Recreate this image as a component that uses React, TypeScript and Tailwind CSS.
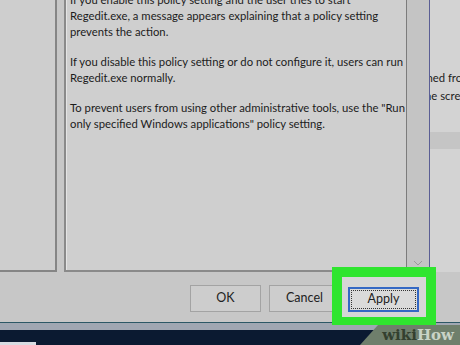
export default function App() {
  const paragraphs = [
    [
      "If you enable this policy setting and the user tries to start",
      "Regedit.exe, a message appears explaining that a policy setting",
      "prevents the action.",
    ],
    [
      "If you disable this policy setting or do not configure it, users can run",
      "Regedit.exe normally.",
    ],
    [
      'To prevent users from using other administrative tools, use the "Run',
      'only specified Windows applications" policy setting.',
    ],
  ];

  return (
    <div className="relative flex h-[345px] w-[460px] flex-col overflow-hidden bg-[#c7c7c7] font-['Lato','Noto_Sans',sans-serif] text-[#1c1c1c]">
      {/* dialog */}
      <div className="flex h-[322px] flex-col">
        <div className="flex h-[272px]">
          {/* options panel */}
          <div className="w-[57px] shrink-0 border-r-2 border-b-2 border-[#858585] bg-[#cecece]" />
          <div className="w-[7px] shrink-0" />

          {/* help box */}
          <div className="flex w-[365px] shrink-0 border-l-2 border-b-2 border-[#8a8a8a] bg-[#cfcfcf]">
            <div className="min-w-0 flex-1 overflow-hidden border-l border-[#e4e4e4] pl-[3px]">
              <div className="mt-[-8px] text-[11.3px] leading-[16px]">
                {paragraphs.map((p, i) => (
                  <div key={i} className="mb-[14px]">
                    {p.map((line) => (
                      <div key={line} className="whitespace-nowrap">
                        {line}
                      </div>
                    ))}
                  </div>
                ))}
              </div>
            </div>
            <div className="flex w-[23px] shrink-0 flex-col justify-end border-l border-[#7c7c7c] bg-[#c4c4c4] pb-[2px]">
              <svg width="22" height="10" viewBox="0 0 22 10" className="mx-auto">
                <path d="M7 3 L11 7 L15 3" fill="none" stroke="#9a9a9a" strokeWidth="1" />
              </svg>
            </div>
          </div>

          {/* window behind */}
          <div className="flex min-w-0 flex-1 flex-col overflow-hidden border-l border-[#5a5e94] bg-[#d3d3d3] text-[11.3px]">
            <div className="h-[69px] shrink-0" />
            <div className="ml-[-9px] whitespace-nowrap leading-[18px]">ched from</div>
            <div className="ml-[-9px] whitespace-nowrap leading-[18px]">the screen</div>
            <div className="mt-[27px] h-[17px] shrink-0 bg-[#c5c5c5]" />
          </div>
        </div>

        {/* buttons */}
        <div className="flex flex-1 gap-[8px] pl-[190px] pt-[13px]">
          <button className="h-[27px] w-[71px] border border-[#a3a3a3] bg-[#cdcdcd] text-[12.5px] text-[#222]">
            OK
          </button>
          <button className="h-[27px] w-[71px] border border-[#a3a3a3] bg-[#cdcdcd] text-[12.5px] text-[#222]">
            Cancel
          </button>
          <div className="relative">
            <div className="absolute left-[-16px] top-[-18px] h-[58px] w-[104px] border-x-[10px] border-t-[10px] border-b-[8px] border-[#2fe52f] bg-[#d6d6d6]" />
            <button className="relative h-[25px] w-[71px] border-2 border-[#3468c4] bg-[#dadada] p-[1px] text-[12.5px] text-[#222]">
              <span className="flex h-full w-full items-center justify-center border border-dotted border-[#333]">
                Apply
              </span>
            </button>
          </div>
        </div>
      </div>

      {/* taskbar */}
      <div className="h-[1px] bg-[#2c5866]" />
      <div className="h-[7px] bg-[#a0a7b2]" />
      <div className="relative flex flex-1 items-end bg-[#0b1a31]">
        <div className="h-[3px] w-[36px] bg-[#d8dce2]" />
      </div>

      {/* watermark */}
      <div className="absolute bottom-0 right-0 flex h-[20px] w-[100px] items-center justify-end pr-[6px] [clip-path:polygon(18%_0,100%_0,100%_100%,0_100%)] bg-[#6f7f6c]">
        <span className="font-['DejaVu_Serif',serif] text-[15px] font-bold leading-none text-[#33402f]">wiki</span>
        <span className="font-['DejaVu_Serif',serif] text-[15px] font-bold leading-none text-[#c9d3c6]">How</span>
      </div>
    </div>
  );
}
